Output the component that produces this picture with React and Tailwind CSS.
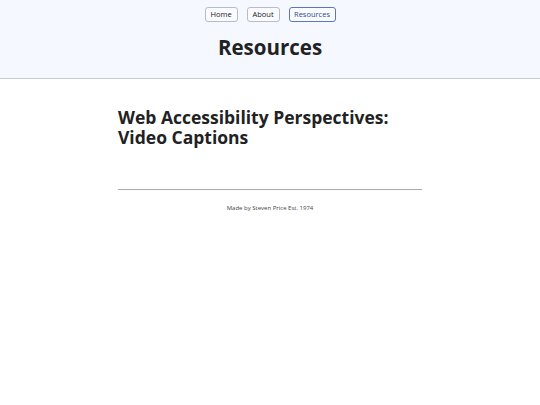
export default function App() {
  const font = { fontFamily: '"Open Sans", "Noto Sans", sans-serif' };
  return (
    <div className="min-h-[405px] bg-white text-[#222]" style={font}>
      <header className="bg-[#f5f8ff] border-b border-[#c8c8d0] h-[79px] flex flex-col items-center">
        <nav className="flex gap-[9px] mt-[7px]">
          <a className="h-[15px] w-[33px] flex items-center justify-center text-[7.5px] border border-[#b8bcc6] rounded-[3px] bg-white/40 text-[#222]">Home</a>
          <a className="h-[15px] w-[33px] flex items-center justify-center text-[7.5px] border border-[#b8bcc6] rounded-[3px] bg-white/40 text-[#222]">About</a>
          <a className="h-[15px] w-[47px] flex items-center justify-center text-[7.5px] border border-[#5a76bc] rounded-[3px] bg-white/40 text-[#2f4a90]">Resources</a>
        </nav>
        <h1 className="text-[20.5px] font-bold leading-none mt-[15px] text-[#222]">Resources</h1>
      </header>
      <main className="w-[304px] mx-auto">
        <h2 className="text-[17.5px] font-bold leading-[20px] mt-[28px] text-[#222]">
          Web Accessibility Perspectives: Video Captions
        </h2>
        <hr className="mt-[42px] border-t border-[#aaa]" />
        <p className="text-[6px] text-center mt-[14px] text-[#444]">Made by Steven Price Est. 1974</p>
      </main>
    </div>
  );
}
